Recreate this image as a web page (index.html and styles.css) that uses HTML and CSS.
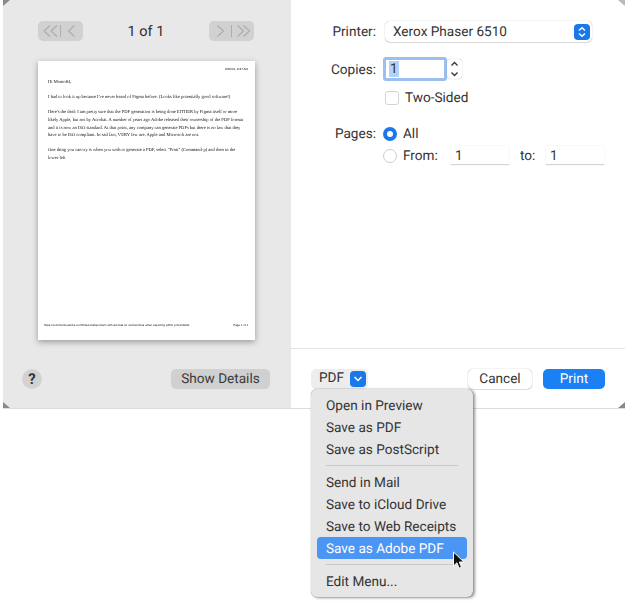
FILE: index.html
```html
<!DOCTYPE html>
<html lang="en">
<head>
  <meta charset="UTF-8">
  <title>Print</title>
  <link rel="stylesheet" href="styles.css">
</head>
<body>
  <div class="dialog">
    <div class="sidebar">
      <div class="pager">
        <div class="nav-btn nav-prev">
          <svg width="15" height="12" viewBox="0 0 15 12"><path d="M7 .5 1 6l6 5.5M14 .5 8 6l6 5.5"/></svg>
          <span class="nav-sep"></span>
          <svg width="7" height="12" viewBox="0 0 7 12"><path d="M6.5.5.5 6l6 5.5"/></svg>
        </div>
        <div class="page-count">1 of 1</div>
        <div class="nav-btn nav-next">
          <svg width="7" height="12" viewBox="0 0 7 12"><path d="m.5.5 6 5.500-6 5.500"/></svg>
          <span class="nav-sep"></span>
          <svg width="13" height="12" viewBox="0 0 13 12"><path d="m.5.5 6 5.500-6 5.500M6.500.5l6 5.500-6 5.500"/></svg>
        </div>
      </div>

      <div class="sheet">
        <div class="sheet-date">8/30/21, 8:37 AM</div>
        <p>Hi Momo84,</p>
        <p>I had to look it up because I've never heard of Figma before. (Looks like potentially good software!)</p>
        <p>Here's the deal: I am pretty sure that the PDF generation is being done EITHER by Figma itself or more<br>
        likely Apple, but not by Acrobat. A number of years ago Adobe released their ownership of the PDF format<br>
        and it is now an ISO standard. At that point, any company can generate PDFs but there is no law that they<br>
        have to be ISO compliant. In sad fact, VERY few are. Apple and Microsoft are not.</p>
        <p>One thing you can try is when you wish to generate a PDF, select "Print" (Command-p) and then in the<br>
        lower left</p>
        <div class="sheet-foot">
          <span>https://community.adobe.com/t5/acrobat/problem-with-acrobat-dc-vertical-lines-when-exporting-pdf/m-p/12238282</span>
          <span>Page 1 of 1</span>
        </div>
      </div>

      <div class="side-bottom">
        <div class="help">?</div>
        <div class="details">Show Details</div>
      </div>
    </div>

    <div class="main">
      <div class="form">
        <div class="row row-printer">
          <div class="lbl txt">Printer:</div>
          <div class="select">
            <span class="txt">Xerox Phaser 6510</span>
            <span class="select-arrows">
              <svg width="10" height="12" viewBox="0 0 10 12"><path d="M2 4.500 5 1.800l3 2.700M2 7.500l3 2.700 3-2.700"/></svg>
            </span>
          </div>
        </div>
        <div class="row row-copies">
          <div class="lbl txt">Copies:</div>
          <div class="copies-input"><span class="sel">1</span></div>
          <div class="stepper">
            <svg width="15" height="10" viewBox="0 0 15 10"><path d="m4.500 6.500 3-3 3 3"/></svg>
            <svg width="15" height="10" viewBox="0 0 15 10"><path d="m4.500 3.500 3 3 3-3"/></svg>
          </div>
        </div>
        <div class="row row-sided">
          <div class="lbl"></div>
          <span class="check"></span>
          <span class="txt">Two-Sided</span>
        </div>
        <div class="row row-all">
          <div class="lbl txt">Pages:</div>
          <span class="radio on"></span>
          <span class="txt">All</span>
        </div>
        <div class="row row-from">
          <div class="lbl"></div>
          <span class="radio"></span>
          <span class="from-lbl txt">From:</span>
          <div class="num">1</div>
          <span class="to-lbl txt">to:</span>
          <div class="num">1</div>
        </div>
      </div>
      <div class="footer">
        <div class="pdf-btn">
          <span>PDF</span>
          <span class="pdf-arrow">
            <svg width="10" height="8" viewBox="0 0 10 8"><path d="m1.500 2 3.500 3.500L8.500 2"/></svg>
          </span>
        </div>
        <div class="cancel">Cancel</div>
        <div class="print">Print</div>
      </div>
    </div>

    <div class="corner tl"></div>
    <div class="corner tr"></div>
    <div class="corner bl"></div>
    <div class="corner br"></div>
  </div>

  <div class="menu">
    <div class="item">Open in Preview</div>
    <div class="item">Save as PDF</div>
    <div class="item">Save as PostScript</div>
    <div class="sep"></div>
    <div class="item">Send in Mail</div>
    <div class="item">Save to iCloud Drive</div>
    <div class="item">Save to Web Receipts</div>
    <div class="item active">Save as Adobe PDF</div>
    <div class="sep"></div>
    <div class="item">Edit Menu...</div>
    <svg class="cursor" width="14" height="20" viewBox="0 0 14 20"><path d="M1.500 1v14l3.400-3.200 2.200 5.400 2.400-1-2.200-5.200h4.600z"/></svg>
  </div>
</body>
</html>
```

FILE: styles.css
```css
body {
  margin: 0;
  background: #fff;
  font-family: Roboto, "Liberation Sans", sans-serif;
  font-size: 13.6px;
  line-height: 17px;
  color: #333;
  overflow: hidden;
  text-rendering: geometricPrecision;
}
svg path {
  fill: none;
}
.dialog {
  position: relative;
  display: flex;
  width: 622px;
  height: 409px;
  margin-left: 3px;
  border-bottom: 1px solid #ddd;
  box-sizing: border-box;
}

/* left side */
.sidebar {
  width: 288px;
  background: #e8e8e8;
  display: flex;
  flex-direction: column;
  padding: 21px 20px 0 35px;
  box-sizing: border-box;
}
.pager {
  display: flex;
  align-items: center;
  justify-content: space-between;
  width: 216px;
  height: 20px;
}
.nav-btn {
  display: flex;
  align-items: center;
  width: 45px;
  height: 20px;
  background: #d1d1d1;
  border-radius: 5px;
  box-sizing: border-box;
}
.nav-prev {
  padding-left: 5px;
}
.nav-next {
  padding-left: 8px;
}
.nav-btn path {
  stroke: #adadad;
  stroke-width: 1.2;
}
.nav-sep {
  width: 1px;
  height: 12px;
  background: #adadad;
}
.nav-prev .nav-sep {
  margin: 0 7px 0 2px;
}
.nav-next .nav-sep {
  margin: 0 5px 0 7px;
}
.page-count {
  font-size: 14.5px;
  color: #2e2e2e;
}
.sheet {
  position: relative;
  width: 217px;
  height: 279px;
  margin-top: 20px;
  padding: 5px 10px 0;
  background: #fff;
  box-sizing: border-box;
  box-shadow: 0 2px 6px rgba(0, 0, 0, 0.35);
  font-family: "Liberation Serif", serif;
  font-size: 4.55px;
  line-height: 7.6px;
  color: #111;
  filter: blur(0.3px);
}
.sheet p {
  margin: 0 0 7.6px;
  white-space: nowrap;
}
.sheet-date {
  font-family: "Liberation Sans", sans-serif;
  font-size: 3px;
  line-height: 7px;
  text-align: right;
  margin-bottom: 5px;
  margin-right: -3px;
}
.sheet-foot {
  position: absolute;
  left: 6px;
  right: 7px;
  bottom: 12px;
  display: flex;
  justify-content: space-between;
  font-family: "Liberation Sans", sans-serif;
  font-size: 2.9px;
  line-height: 5px;
  white-space: nowrap;
}
.side-bottom {
  display: flex;
  align-items: center;
  justify-content: space-between;
  margin: 29px 0 0 -16px;
  width: 248px;
}
.help {
  width: 20px;
  height: 20px;
  border-radius: 50%;
  background: #d2d2d2;
  text-align: center;
  font-size: 15px;
  font-weight: 700;
  line-height: 20px;
}
.details {
  width: 99px;
  height: 20px;
  border-radius: 5px;
  background: #d0d0d0;
  text-align: center;
  line-height: 20px;
  color: #3a3a3a;
}

/* right side */
.main {
  flex: 1;
  display: flex;
  flex-direction: column;
  background: #fff;
}
.form {
  flex: 1;
  padding: 21px 0 0 19px;
}
.row {
  display: flex;
  align-items: center;
}
.txt {
  padding-top: 1px;
  margin-bottom: -1px;
}
.lbl {
  width: 66px;
  margin-right: 9px;
  text-align: right;
  flex-shrink: 0;
}
.select {
  display: flex;
  align-items: center;
  justify-content: space-between;
  width: 207px;
  height: 21px;
  padding: 0 2px 0 8px;
  box-sizing: border-box;
  border-radius: 5px;
  background: #fff;
  box-shadow: 0 0 1px rgba(0, 0, 0, 0.4), 0 1px 1px rgba(0, 0, 0, 0.12);
}
.select-arrows {
  display: flex;
  align-items: center;
  justify-content: center;
  width: 16px;
  height: 16px;
  border-radius: 4px;
  background: #1a78ea;
}
.select-arrows path,
.pdf-arrow path {
  stroke: #fff;
  stroke-width: 1.5;
}
.row-copies {
  margin-top: 15px;
}
.copies-input {
  width: 64px;
  height: 24px;
  margin-left: -2px;
  padding-left: 3px;
  box-sizing: border-box;
  border: 3px solid #9bbff0;
  border-radius: 3px;
  line-height: 18px;
}
.sel {
  background: #b3d2f7;
  padding: 0 1px;
}
.stepper {
  display: flex;
  flex-direction: column;
  justify-content: center;
  width: 15px;
  height: 20px;
  border-radius: 4px;
  box-shadow: 0 0 1px rgba(0, 0, 0, 0.4);
}
.stepper path {
  stroke: #333;
  stroke-width: 1.3;
}
.row-sided {
  margin-top: 8px;
}
.check {
  width: 14px;
  height: 14px;
  margin-right: 6px;
  border-radius: 3px;
  border: 1px solid #d4d4d4;
  box-sizing: border-box;
}
.row-all {
  margin-top: 19px;
}
.row-all .lbl,
.row-from .lbl {
  margin-right: 7px;
}
.radio {
  width: 14px;
  height: 14px;
  margin-right: 6px;
  border-radius: 50%;
  border: 1px solid #cdcdcd;
  box-sizing: border-box;
  flex-shrink: 0;
}
.radio.on {
  border: 4.5px solid #1a78ea;
  background: #fff;
}
.row-from {
  margin-top: 4px;
}
.from-lbl {
  width: 48px;
}
.to-lbl {
  width: 15px;
  margin: 0 11px -1px;
}
.num {
  width: 58px;
  height: 19px;
  padding-left: 4px;
  box-sizing: border-box;
  line-height: 21px;
  border-bottom: 1px solid #d4d4d4;
  box-shadow: 0 0 1px rgba(0, 0, 0, 0.15);
}
.footer {
  display: flex;
  align-items: center;
  height: 60px;
  padding: 0 20px;
  border-top: 1px solid #e4e4e4;
  box-sizing: border-box;
}
.pdf-btn {
  display: flex;
  align-items: center;
  justify-content: space-between;
  width: 57px;
  height: 20px;
  padding: 0 2px 0 8px;
  box-sizing: border-box;
  border-radius: 5px;
  background: #ededed;
}
.pdf-arrow {
  display: flex;
  align-items: center;
  justify-content: center;
  width: 16px;
  height: 16px;
  border-radius: 4px;
  background: #1a78ea;
}
.cancel {
  width: 64px;
  height: 20px;
  margin-left: auto;
  text-align: center;
  line-height: 20px;
  border-radius: 5px;
  box-shadow: 0 0 1px rgba(0, 0, 0, 0.45), 0 1px 1px rgba(0, 0, 0, 0.1);
}
.print {
  width: 62px;
  height: 20px;
  margin-left: 11px;
  text-align: center;
  line-height: 20px;
  border-radius: 5px;
  background: #1a80f4;
  color: #fff;
}

/* window corners showing through */
.corner {
  position: absolute;
  width: 7px;
  height: 6px;
  background: #8a8a8a;
}
.corner.tl {
  top: 0;
  left: 0;
  clip-path: polygon(0 0, 100% 0, 0 100%);
}
.corner.tr {
  top: 0;
  right: 0;
  clip-path: polygon(0 0, 100% 0, 100% 100%);
  background: #bbb;
}
.corner.bl {
  bottom: 0;
  left: 0;
  clip-path: polygon(0 0, 100% 100%, 0 100%);
}
.corner.br {
  bottom: 0;
  right: 0;
  clip-path: polygon(100% 0, 100% 100%, 0 100%);
}

/* PDF menu */
.menu {
  position: absolute;
  left: 311px;
  top: 389px;
  width: 162px;
  height: 208px;
  padding: 5px 6px;
  box-sizing: border-box;
  background: #e6e6e6;
  border-radius: 6px;
  box-shadow: 0 0 1px rgba(0, 0, 0, 0.5), 2px 1px 3px rgba(0, 0, 0, 0.4);
}
.item {
  height: 22px;
  padding-left: 9px;
  border-radius: 4px;
  line-height: 24px;
  white-space: nowrap;
}
.item.active {
  background: #4b95f5;
  color: #fff;
}
.sep {
  height: 1px;
  margin: 5px 9px 5px;
  background: #c9c9c9;
}
.cursor {
  position: absolute;
  left: 141px;
  top: 162px;
}
.cursor path {
  fill: #111;
  stroke: #fff;
  stroke-width: 1;
}
```
